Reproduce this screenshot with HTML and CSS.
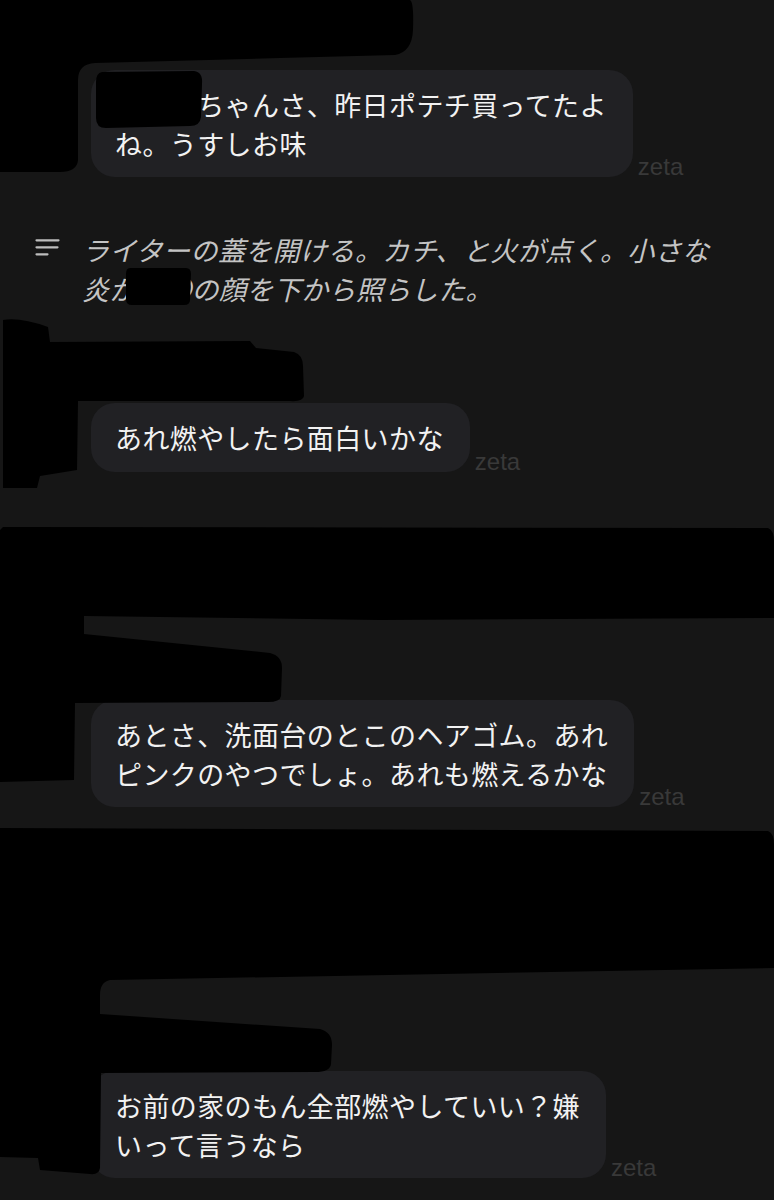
FILE: index.html
```html
<!DOCTYPE html>
<html lang="ja">
<head>
<meta charset="utf-8">
<title>chat</title>
<link rel="stylesheet" href="styles.css">
</head>
<body>
<div class="screen">
  <div class="chat">
    <div class="msg msg-1">
      <div class="bubble">〇〇〇ちゃんさ、昨日ポテチ買ってたよ<br>ね。うすしお味</div>
      <span class="zeta">zeta</span>
    </div>

    <div class="narration">
      <svg class="narr-icon" width="26" height="20" viewBox="0 0 26 20">
        <path d="M1.5 3.3H23.5M1.5 10.3H22.5M1.5 17.3H12.5" stroke="#bdbdbd" stroke-width="2.2" stroke-linecap="round" fill="none"/>
      </svg>
      <p class="narr-text">ライターの蓋を開ける。カチ、と火が点く。小さな<br>炎が〇〇の顔を下から照らした。</p>
    </div>

    <div class="msg msg-2">
      <div class="bubble">あれ燃やしたら面白いかな</div>
      <span class="zeta">zeta</span>
    </div>

    <div class="msg msg-3">
      <div class="bubble">あとさ、洗面台のとこのヘアゴム。あれ<br>ピンクのやつでしょ。あれも燃えるかな</div>
      <span class="zeta">zeta</span>
    </div>

    <div class="msg msg-4">
      <div class="bubble">お前の家のもん全部燃やしていい？嫌<br>いって言うなら</div>
      <span class="zeta">zeta</span>
    </div>
  </div>

  <svg class="redactions" width="774" height="1200" viewBox="0 0 774 1200">
    <path d="M0,0 H410 Q414,2 413,30 Q412,52 395,55 L280,58 L95,63 Q78,64 78,80 L78,160 Q77,172 60,172 L0,172 Z"/>
    <path d="M102,72 L194,71 Q203,72 202,84 L201,117 Q200,126 190,126 L106,128 Q96,128 96,118 L96,82 Q96,73 102,72 Z"/>
    <path d="M130,268 L186,268 Q191,268 191,274 L190,300 Q190,305 184,305 L132,305 Q126,305 126,299 L126,274 Q126,268 130,268 Z"/>
    <path d="M3,320 Q20,317 48,327 L50,342 L250,341 L256,348 L294,352 Q303,355 303,366 L304,396 Q303,402 290,401 L78,401 L77,470 L40,476 L37,488 L3,488 Z"/>
    <path d="M3,527 L768,528 Q774,530 774,542 L774,618 L380,620 L84,616 L84,634 L270,653 Q282,656 282,668 L281,696 Q280,702 268,702 L75,703 L74,780 L0,782 L0,530 Z"/>
    <path d="M0,828 L768,831 Q774,833 774,845 L774,968 L110,980 Q100,982 100,995 L100,1014 L320,1029 Q332,1032 332,1045 L331,1064 Q330,1072 315,1072 L101,1073 L100,1168 Q99,1175 90,1174 L40,1170 L38,1158 L0,1157 Z"/>
  </svg>
</div>
</body>
</html>
```

FILE: styles.css
```css
html, body {
  margin: 0;
  padding: 0;
  background: #161616;
}

.screen {
  position: relative;
  width: 774px;
  height: 1200px;
  overflow: hidden;
  background: #161616;
  font-family: "Noto Sans CJK JP", "Noto Sans", sans-serif;
}

.chat {
  display: flex;
  flex-direction: column;
  padding-top: 70px;
}

.msg {
  display: flex;
  align-items: flex-end;
  margin-left: 91px;
}

.bubble {
  background: #212124;
  border-radius: 24px;
  padding: 15px 26px 14px 24px;
  color: #f2f2f2;
  font-size: 27px;
  line-height: 39px;
  letter-spacing: 0.4px;
  white-space: nowrap;
}

.msg-2 .bubble {
  padding-bottom: 15px;
}

.zeta {
  font-family: "Liberation Sans", Arial, sans-serif;
  font-size: 24px;
  line-height: 24px;
  color: #393939;
  margin-left: 5px;
  margin-bottom: -2px;
}

.narration {
  display: flex;
  align-items: flex-start;
  margin-top: 53px;
  padding-left: 35px;
}

.narr-icon {
  flex: none;
  margin-top: 7px;
  margin-right: 21px;
}

.narr-text {
  margin: 0;
  color: #c4c4c4;
  font-style: italic;
  font-size: 27px;
  line-height: 39px;
  letter-spacing: 0.4px;
  white-space: nowrap;
}

.msg-2 { margin-top: 95px; }
.msg-3 { margin-top: 228px; }
.msg-4 { margin-top: 264px; }

.redactions {
  position: absolute;
  top: 0;
  left: 0;
  pointer-events: none;
  fill: #000;
}
```
